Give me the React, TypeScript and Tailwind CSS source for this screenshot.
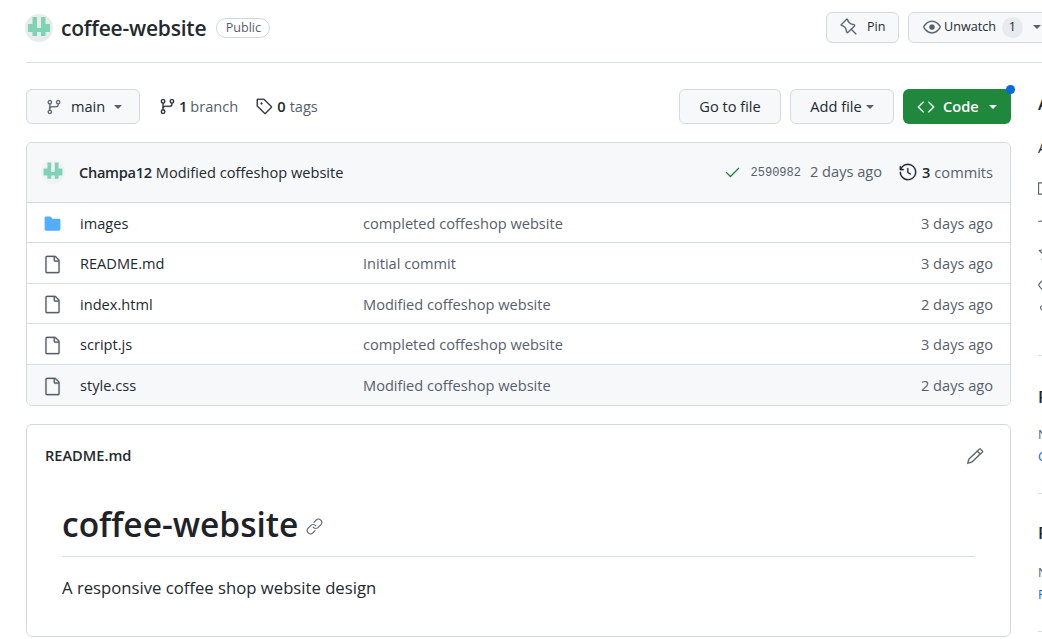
import { GoPin, GoEye, GoGitBranch, GoTag, GoHistory, GoCheck, GoFile, GoFileDirectoryFill, GoPencil, GoLink, GoCode, GoBook, GoPulse, GoStar, GoRepoForked } from 'react-icons/go';

const files = [
  { name: 'images', msg: 'completed coffeshop website', age: '3 days ago', dir: true },
  { name: 'README.md', msg: 'Initial commit', age: '3 days ago' },
  { name: 'index.html', msg: 'Modified coffeshop website', age: '2 days ago' },
  { name: 'script.js', msg: 'completed coffeshop website', age: '3 days ago' },
  { name: 'style.css', msg: 'Modified coffeshop website', age: '2 days ago', hover: true },
];

function Caret({ className }: { className: string }) {
  return <span className={`inline-block w-0 h-0 border-x-[4px] border-x-transparent border-t-[4px] ${className}`} />;
}

// identicon, same one in the repo header and on the commit row
function Avatar({ size, ring }: { size: number; ring?: boolean }) {
  return (
    <svg width={size} height={size} viewBox="0 0 28 28" className="shrink-0">
      <circle cx="14" cy="14" r="14" fill={ring ? '#e8ecec' : '#f0f2f3'} />
      <path
        fill="#7fd3b4"
        d="M7.5 3H12v11h4V3h4.5v7H25v8h-4.5v4H16v-4h-4v4H7.5v-4H3v-8h4.5z"
      />
    </svg>
  );
}

export default function App() {
  return (
    <div className="h-[639px] w-[1042px] overflow-hidden bg-white text-[#24292f] font-['Open_Sans','Noto_Sans',sans-serif] text-[14.6px]">
      <div className="pl-[26px]">
        {/* repo title row */}
        <div className="flex items-center h-[63px] -mr-[6px] border-b border-[#d8dee4] pb-[8px]">
          <div className="-ml-[1px] mt-[1px]">
            <Avatar size={28} ring />
          </div>
          <span className="ml-[8px] mt-[3px] text-[21px] font-semibold tracking-[-0.2px]">coffee-website</span>
          <span className="ml-[10px] h-[20px] w-[54px] justify-center mt-[2px] flex items-center rounded-full border border-[#d0d7de] text-[12.6px] font-medium text-[#57606a]">Public</span>
          <div className="ml-auto flex gap-[9px]">
            <button className="flex items-center h-[31px] w-[73px] pl-[13px] rounded-md border border-[#d5d9de] bg-[#f6f8fa] text-[12.6px] font-medium">
              <GoPin size={18} className="text-[#57606a] stroke-[0.4px]" />
              <span className="ml-[9px]">Pin</span>
            </button>
            <button className="flex items-center h-[31px] w-[140px] pl-[14px] rounded-md border border-[#d5d9de] bg-[#f6f8fa] text-[12.6px] font-medium">
              <GoEye size={18} className="text-[#57606a] shrink-0 stroke-[0.4px]" />
              <span className="ml-[3px]">Unwatch</span>
              <span className="ml-[6px] w-[21px] h-[21px] shrink-0 rounded-full bg-[#e7eaee] flex items-center justify-center">1</span>
              <Caret className="ml-[10px] shrink-0 border-t-[#57606a]" />
            </button>
          </div>
        </div>

        <div className="flex gap-[27px] mt-[26px]">
          <main className="w-[985px] shrink-0">
            {/* branch bar */}
            <div className="flex items-center h-[35px]">
              <button className="flex items-center h-[35px] w-[114px] pl-[19px] rounded-md border border-[#d5d9de] bg-[#f6f8fa] font-medium">
                <GoGitBranch size={16} className="text-[#57606a] stroke-[0.4px]" />
                <span className="ml-[9px]">main</span>
                <Caret className="ml-[9px] border-t-[#57606a]" />
              </button>
              <span className="ml-[19px] flex items-center text-[#57606a]">
                <GoGitBranch size={17} className="text-[#24292f] stroke-[0.4px]" />
                <b className="ml-[3px] font-semibold text-[#24292f]">1</b>
                <span className="ml-[3px]">branch</span>
              </span>
              <span className="ml-[18px] flex items-center text-[#57606a]">
                <GoTag size={17} className="text-[#24292f] stroke-[0.4px]" />
                <b className="ml-[4px] font-semibold text-[#24292f]">0</b>
                <span className="ml-[4px]">tags</span>
              </span>
              <div className="ml-auto flex gap-[9px]">
                <button className="h-[35px] w-[102px] rounded-md border border-[#d5d9de] bg-[#f6f8fa] font-medium">Go to file</button>
                <button className="h-[35px] w-[104px] rounded-md border border-[#d5d9de] bg-[#f6f8fa] font-medium flex items-center justify-center">
                  Add file
                  <Caret className="ml-[4px] border-t-[#57606a]" />
                </button>
                <div className="relative">
                  <button className="h-[35px] w-[108px] pl-[14px] rounded-md bg-[#1f883d] text-white font-semibold flex items-center">
                    <GoCode size={18} className="stroke-[0.4px]" />
                    <span className="ml-[8px]">Code</span>
                    <Caret className="ml-[10px] border-t-white" />
                  </button>
                  <span className="absolute -top-[4px] -right-[4px] w-[9px] h-[9px] rounded-full bg-[#0969da]" />
                </div>
              </div>
            </div>

            {/* file list */}
            <div className="mt-[18px] rounded-md border border-[#d5d9de] overflow-hidden">
              <div className="flex items-center h-[59.7px] pl-[14px] pr-[17px] bg-[#f6f8fa] border-b border-[#d5d9de]">
                <Avatar size={24} />
                <span className="ml-[14px] mt-[2px] font-semibold tracking-[-0.3px]">Champa12</span>
                <span className="ml-[4px] mt-[2px]">Modified coffeshop website</span>
                <GoCheck size={17} className="ml-auto text-[#1a7f37] stroke-[0.4px]" />
                <span className="ml-[10px] mt-[1px] font-['Liberation_Mono',monospace] text-[12px] text-[#57606a]">2590982</span>
                <span className="ml-[9px] text-[#57606a]">2 days ago</span>
                <GoHistory size={18} className="ml-[17px] text-[#24292f] stroke-[0.4px]" />
                <b className="ml-[5px] mt-[2px] font-semibold">3</b>
                <span className="ml-[4px] mt-[2px] text-[#57606a]">commits</span>
              </div>
              {files.map((f, i) => (
                <div
                  key={f.name}
                  className={`flex items-center h-[40.5px] pl-[16px] pr-[17px] pt-[3px] ${i < files.length - 1 ? 'border-b border-[#d8dee4]' : ''} ${f.hover ? 'bg-[#f6f8fa]' : ''}`}
                >
                  {f.dir ? (
                    <GoFileDirectoryFill size={19} className="text-[#54aeff]" />
                  ) : (
                    <GoFile size={19} className="text-[#57606a] stroke-[0.4px]" />
                  )}
                  <span className="ml-[18px] w-[283px]">{f.name}</span>
                  <span className="text-[#57606a]">{f.msg}</span>
                  <span className="ml-auto text-[#57606a]">{f.age}</span>
                </div>
              ))}
            </div>

            {/* readme */}
            <div className="mt-[17.7px] h-[213px] rounded-md border border-[#d5d9de] px-[18px]">
              <div className="flex items-center justify-between h-[62px] pr-[8px]">
                <span className="font-semibold">README.md</span>
                <GoPencil size={18} className="text-[#57606a] stroke-[0.4px]" />
              </div>
              <div className="px-[17px]">
                <h1 className="flex items-center h-[70px] pt-[6px] border-b border-[#d8dee4] text-[33.5px] font-semibold text-[#1f2328]">
                  coffee-website
                  <GoLink size={17} className="ml-[8px] mt-[5px] text-[#57606a]" />
                </h1>
                <p className="mt-[18px] text-[16.7px]">A responsive coffee shop website design</p>
              </div>
            </div>
          </main>

          {/* sidebar, cut off by the window edge */}
          <aside className="w-[296px] shrink-0">
            <h2 className="mt-[2px] text-[16.7px] font-semibold">About</h2>
            <p className="mt-[21px]">A responsive coffee shop website design</p>
            <ul className="mt-[20px] flex flex-col gap-[12px] text-[#57606a]">
              <li className="flex items-center gap-2 h-[20px]"><GoBook size={18} />Readme</li>
              <li className="flex items-center gap-2 h-[20px]"><GoPulse size={18} />Activity</li>
              <li className="flex items-center gap-2 h-[20px]"><GoStar size={18} />0 stars</li>
              <li className="flex items-center gap-2 h-[20px]"><GoEye size={18} />1 watching</li>
              <li className="flex items-center gap-2 h-[20px] -mt-[4px]"><GoRepoForked size={18} />0 forks</li>
            </ul>
            <div className="mt-[32px] border-t border-[#d8dee4] pt-[28px]">
              <h2 className="text-[16.7px] font-semibold">Releases</h2>
              <p className="mt-[17px] text-[12.6px] text-[#57606a]">No releases published</p>
              <p className="mt-[3px] text-[12.6px] text-[#0969da]">Create a new release</p>
            </div>
            <div className="mt-[26px] border-t border-[#d8dee4] pt-[26px]">
              <h2 className="text-[16.7px] font-semibold">Packages</h2>
              <p className="mt-[19px] text-[12.6px] text-[#57606a]">No packages published</p>
              <p className="mt-[3px] text-[12.6px] text-[#0969da]">Publish your first package</p>
            </div>
            <div className="mt-[26px] border-t border-[#d8dee4]" />
          </aside>
        </div>
      </div>
    </div>
  );
}
